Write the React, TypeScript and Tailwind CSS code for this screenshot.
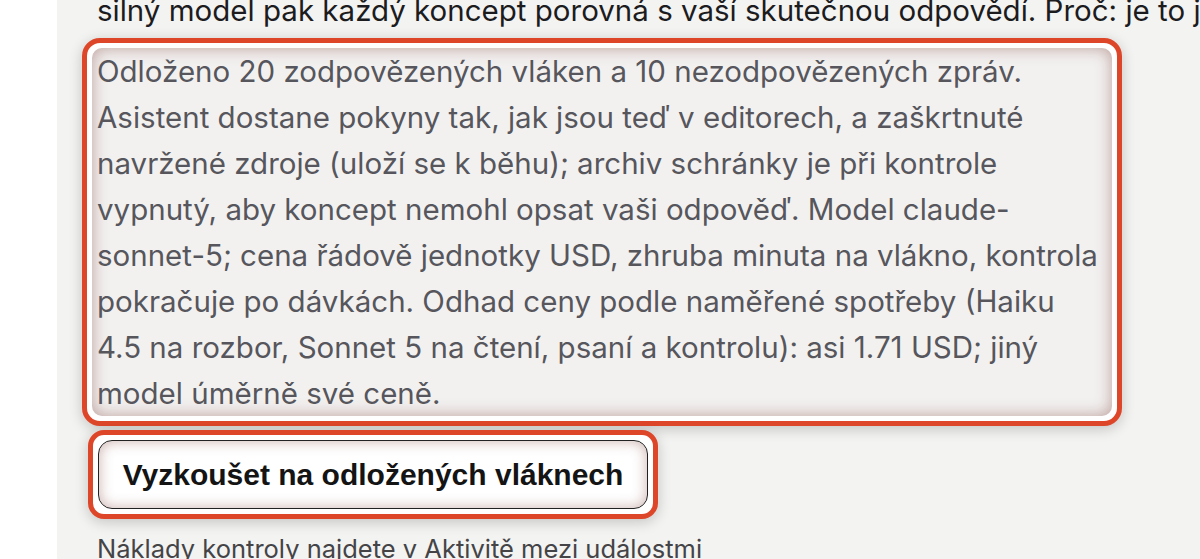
import React from "react";

const body = "font-['Inter','Noto_Sans',sans-serif]";

const summary =
  "Odloženo 20 zodpovězených vláken a 10 nezodpovězených zpráv. Asistent dostane pokyny tak, jak jsou teď v editorech, a zaškrtnuté navržené zdroje (uloží se k běhu); archiv schránky je při kontrole vypnutý, aby koncept nemohl opsat vaši odpověď. Model claude-sonnet-5; cena řádově jednotky USD, zhruba minuta na vlákno, kontrola pokračuje po dávkách. Odhad ceny podle naměřené spotřeby (Haiku 4.5 na rozbor, Sonnet 5 na čtení, psaní a kontrolu): asi 1.71 USD; jiný model úměrně své ceně.";

export default function App() {
  return (
    <div className="flex h-[559px] w-full overflow-hidden bg-white">
      <div className="w-[57px] shrink-0 bg-white" />
      <div className={`flex-1 overflow-hidden bg-[#f3f3f2] pl-[25px] ${body}`}>
        {/* konec předchozího odstavce */}
        <p className="-mt-[13px] whitespace-nowrap pl-[15px] text-[29.5px] leading-[46px] text-[#1c1c1e]">
          silný model pak každý koncept porovná s vaší skutečnou odpovědí. Proč: je to jen
        </p>

        <div className="mt-[5px] w-[1040px] rounded-[18px] border-[5px] border-[#de4629] bg-white p-[5px] shadow-[0_3px_14px_rgba(0,0,0,0.2)]">
          <p className="rounded-[10px] bg-[#f2f1f0] pl-[5px] pr-[6px] text-[29.5px] leading-[46px] text-[#56565c] shadow-[inset_0_0_16px_rgba(130,70,60,0.48)]">
            {summary}
          </p>
        </div>

        <div className="ml-[6px] mt-[4px] inline-block rounded-[16px] border-[5px] border-[#de4629] bg-white p-[5px] shadow-[0_3px_14px_rgba(0,0,0,0.2)]">
          <button className="flex h-[69px] w-[550px] items-center justify-center rounded-[14px] border-[1.5px] border-[#222] bg-white font-['Liberation_Sans',Arial,sans-serif] text-[30px] font-bold text-[#141414] shadow-[inset_0_0_14px_rgba(130,70,60,0.42)]">
            Vyzkoušet na odložených vláknech
          </button>
        </div>

        <p className="mt-[12px] whitespace-nowrap pl-[15px] text-[25.5px] leading-[36px] text-[#444447]">
          Náklady kontroly najdete v Aktivitě mezi událostmi
        </p>
      </div>
    </div>
  );
}
